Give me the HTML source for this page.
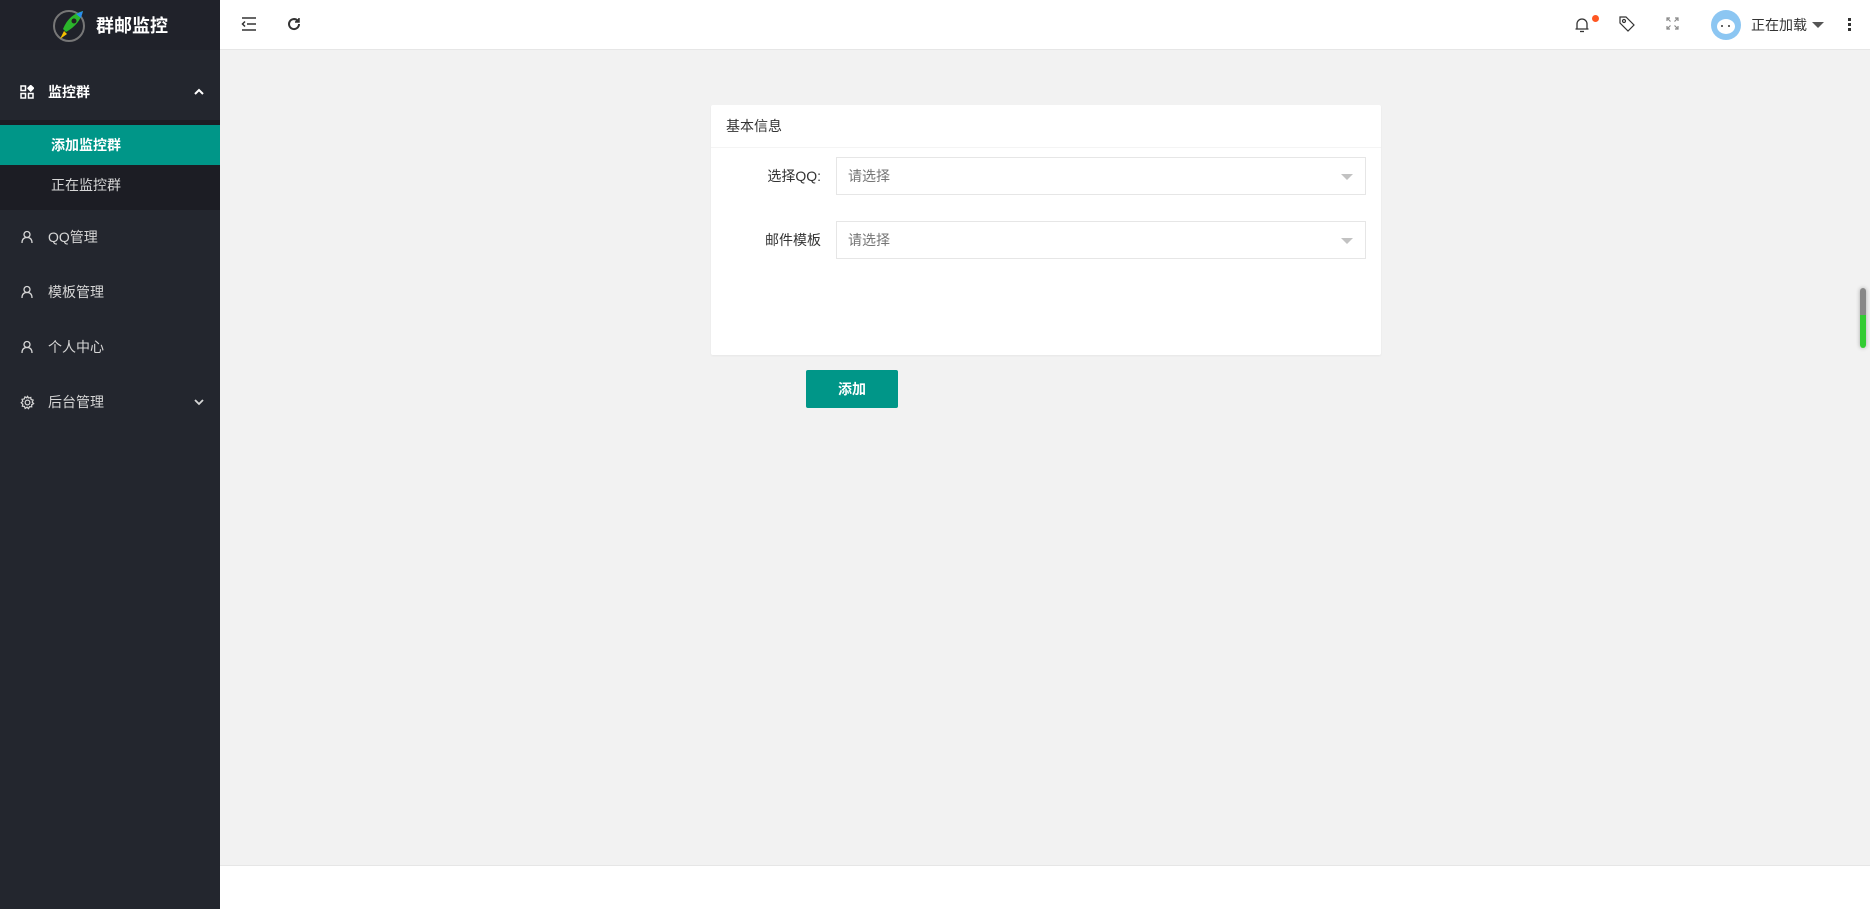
<!DOCTYPE html>
<html><head><meta charset="utf-8"><style>
*{margin:0;padding:0;box-sizing:border-box}
body{width:1870px;height:909px;overflow:hidden;background:#f2f2f2;font-family:"Liberation Sans","Noto Sans CJK SC",sans-serif;position:relative}
.side{position:absolute;left:0;top:0;width:220px;height:909px;background:#23262e}
.logo{height:50px;background:#20222a;display:flex;align-items:center;justify-content:center;color:#fff;font-size:18px;font-weight:bold}
.mi{position:absolute;left:0;width:220px;color:#d6d6d6;font-size:14px;display:flex;align-items:center}
.mi svg{position:absolute;left:20px}
.mi span{position:absolute;left:48px}
.top{position:absolute;left:220px;top:0;right:0;height:50px;background:#fff;border-bottom:1px solid #e6e6e6}
.card{position:absolute;left:711px;top:105px;width:670px;height:250px;background:#fff;border-radius:2px;box-shadow:0 1px 2px rgba(0,0,0,.05)}
.ch{height:43px;border-bottom:1px solid #f4f4f4;padding-left:15px;line-height:43px;font-size:14px;color:#333}
.lab{position:absolute;font-size:14px;color:#333;text-align:right;width:110px;left:0;line-height:20px}
.sel{position:absolute;left:125px;width:530px;height:38px;border:1px solid #e6e6e6;background:#fff;font-size:14px;color:#757575;line-height:36px;padding-left:11px}
.sel:after{content:"";position:absolute;right:12px;top:16px;border:6px solid transparent;border-top-color:#c2c2c2}
.btn{position:absolute;left:806px;top:370px;width:92px;height:38px;background:#009688;color:#fff;font-size:14px;text-align:center;line-height:38px;border-radius:2px;font-weight:bold}
.foot{position:absolute;left:220px;right:0;top:865px;bottom:0;background:#fff;border-top:1px solid #e6e6e6}
</style></head><body>
<div class="side">
 <div class="logo"><svg width="36" height="36" viewBox="0 0 36 36" style="margin-right:8px"><circle cx="17" cy="19" r="15" fill="none" stroke="#777" stroke-width="2"/><path d="M12 24 L8 32 L15 27Z" fill="#f5c000"/><path d="M11 22 C15 12 22 6 31 4 C29 13 23 20 14 25Z" fill="#2bb52b"/><path d="M24 7 L31 4 L29 11Z" fill="#2a8cf0"/><circle cx="22" cy="14" r="2.5" fill="#222"/></svg>群邮监控</div>
 <div class="mi" style="top:70px;height:44px;color:#fff;font-weight:bold"><svg width="14" height="14" viewBox="0 0 14 14" fill="none" stroke="#fff" stroke-width="1.5"><rect x="1" y="1" width="4.5" height="4.5"/><rect x="1" y="8.5" width="4.5" height="4.5"/><rect x="8.5" y="8.5" width="4.5" height="4.5"/><path d="M10.7 0.5 L13.5 3.2 10.7 6 8 3.2Z" fill="#fff"/></svg><span>监控群</span><svg style="left:193px" width="12" height="8" viewBox="0 0 12 8"><path d="M2 6 L6 2 10 6" stroke="#fff" stroke-width="2" fill="none"/></svg></div>
 <div style="position:absolute;top:120px;left:0;width:220px;height:90px;background:#1c1d24"></div>
 <div class="mi" style="top:125px;height:40px;background:#009688;color:#fff;font-weight:bold"><span style="left:51px">添加监控群</span></div>
 <div class="mi" style="top:165px;height:40px"><span style="left:51px">正在监控群</span></div>
 <div class="mi" style="top:222px;height:30px"><svg width="14" height="14" viewBox="0 0 14 14" fill="none" stroke="#d6d6d6" stroke-width="1.3"><circle cx="7" cy="4.5" r="3"/><path d="M2 13 C2 9 4 7.5 7 7.5 S12 9 12 13"/></svg><span>QQ管理</span></div>
 <div class="mi" style="top:277px;height:30px"><svg width="14" height="14" viewBox="0 0 14 14" fill="none" stroke="#d6d6d6" stroke-width="1.3"><circle cx="7" cy="4.5" r="3"/><path d="M2 13 C2 9 4 7.5 7 7.5 S12 9 12 13"/></svg><span>模板管理</span></div>
 <div class="mi" style="top:332px;height:30px"><svg width="14" height="14" viewBox="0 0 14 14" fill="none" stroke="#d6d6d6" stroke-width="1.3"><circle cx="7" cy="4.5" r="3"/><path d="M2 13 C2 9 4 7.5 7 7.5 S12 9 12 13"/></svg><span>个人中心</span></div>
 <div class="mi" style="top:387px;height:30px"><svg width="15" height="15" viewBox="0 0 16 16" fill="none" stroke="#d6d6d6" stroke-width="1.3"><circle cx="8" cy="8" r="2.5"/><path d="M8 1.5 L9.3 3.3 11.5 2.6 11.8 4.8 14 5.5 13 7.5 14.5 9.2 12.5 10.3 12.5 12.6 10.3 12.4 9 14.5 7.5 13 5.5 14.3 4.8 12.2 2.5 12 3 9.8 1.3 8.3 3 6.7 2.2 4.6 4.5 4.2 5.3 2 7.2 3Z"/></svg><span>后台管理</span><svg style="left:193px" width="12" height="8" viewBox="0 0 12 8"><path d="M2 2 L6 6 10 2" stroke="#d6d6d6" stroke-width="1.8" fill="none"/></svg></div>
</div>
<div class="top">
 <svg style="position:absolute;left:21px;top:17px" width="16" height="14" viewBox="0 0 16 14" stroke="#333" stroke-width="1.5"><path d="M1 1H15M6 7H15M1 13H15"/><path d="M4 4.5 L1.5 7 4 9.5" fill="none"/></svg>
 <svg style="position:absolute;left:66px;top:16px" width="16" height="16" viewBox="0 0 16 16" fill="none" stroke="#333" stroke-width="2"><path d="M13 8 A5 5 0 1 1 11.5 4.5"/><path d="M13 2 V6 H9" fill="#333" stroke-width="1.5"/></svg>
 <svg style="position:absolute;left:1354px;top:16px" width="16" height="18" viewBox="0 0 16 18" fill="none" stroke="#333" stroke-width="1.3"><path d="M3 13 V8 A5 5 0 0 1 13 8 V13 H1.5 H14.5"/><path d="M6 15.5 H10"/></svg>
 <div style="position:absolute;left:1372px;top:15px;width:7px;height:7px;border-radius:50%;background:#ff5722"></div>
 <svg style="position:absolute;left:1398px;top:15px" width="18" height="18" viewBox="0 0 18 18" fill="none" stroke="#333" stroke-width="1.2"><path d="M2 2 H8 L16 10 L10 16 L2 8Z"/><circle cx="6" cy="6" r="1.5"/></svg>
 <svg style="position:absolute;left:1446px;top:17px" width="13" height="13" viewBox="0 0 13 13" stroke="#888" stroke-width="1.2" fill="none"><path d="M1 4V1H4M9 1H12V4M12 9V12H9M4 12H1V9M1 1L4.5 4.5M12 1L8.5 4.5M12 12L8.5 8.5M1 12L4.5 8.5"/></svg>
 <div style="position:absolute;left:1491px;top:10px;width:30px;height:30px;border-radius:50%;background:#8cc6f2;overflow:hidden"><div style="position:absolute;left:6px;top:9px;width:18px;height:15px;border-radius:50%;background:#fff"></div><div style="position:absolute;left:10px;top:15px;width:2px;height:2px;background:#333;border-radius:50%"></div><div style="position:absolute;left:17px;top:15px;width:2px;height:2px;background:#333;border-radius:50%"></div></div>
 <div style="position:absolute;left:1531px;top:15px;font-size:14px;color:#333">正在加载</div>
 <div style="position:absolute;left:1592px;top:22px;border:6px solid transparent;border-top-color:#555"></div>
 <div style="position:absolute;left:1628px;top:18px;width:3px;height:3px;background:#333;box-shadow:0 5px 0 #333,0 10px 0 #333"></div>
</div>
<div class="card">
 <div class="ch">基本信息</div>
 <div class="lab" style="top:61px">选择QQ:</div>
 <div class="sel" style="top:52px">请选择</div>
 <div class="lab" style="top:125px">邮件模板</div>
 <div class="sel" style="top:116px">请选择</div>
</div>
<div class="btn">添加</div>
<div style="position:absolute;left:1860px;top:288px;width:6px;height:60px;border-radius:3px;background:linear-gradient(#888 0 45%,#3c3 45%);box-shadow:0 0 4px rgba(0,0,0,.3)"></div>
<div class="foot"></div>
</body></html>
